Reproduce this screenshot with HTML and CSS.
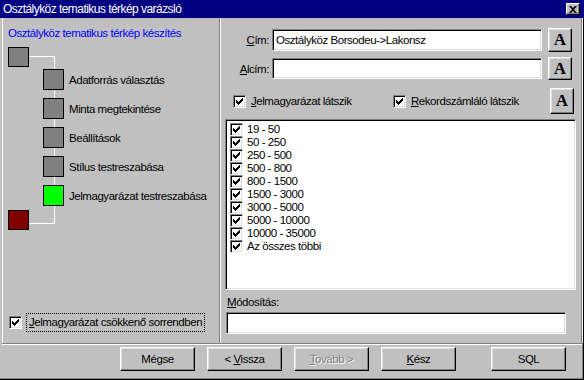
FILE: index.html
```html
<!DOCTYPE html>
<html lang="hu">
<head>
  <meta charset="UTF-8" />
  <title>Osztályköz tematikus térkép varázsló</title>
  <link rel="stylesheet" href="styles.css">
</head>
<body>
<div class="window">
  <div class="titlebar">
    <span class="title">Osztályköz tematikus térkép varázsló</span>
    <span class="close"><svg width="8" height="7" viewBox="0 0 8 7"><path d="M0 0h2l2 2 2-2h2l-3 3.5 3 3.5h-2l-2-2-2 2h-2l3-3.5z" fill="#000"/></svg></span>
  </div>

  <div class="main">
    <div class="left">
      <div class="heading">Osztályköz tematikus térkép készítés</div>
      <div class="tree">
        <div class="node root"><span class="box gray"></span></div>
        <div class="node child"><span class="box gray"></span><span>Adatforrás választás</span></div>
        <div class="node child"><span class="box gray"></span><span>Minta megtekintése</span></div>
        <div class="node child"><span class="box gray"></span><span>Beállítások</span></div>
        <div class="node child"><span class="box gray"></span><span>Stílus testreszabása</span></div>
        <div class="node child"><span class="box green"></span><span>Jelmagyarázat testreszabása</span></div>
        <div class="node last"><span class="box red"></span></div>
      </div>
      <div class="sort-row">
        <span class="cb"><svg viewBox="0 0 11 11"><path d="M2 4h1v1h1v1h1v-1h1v-1h1v-1h1v-1h1v3h-1v1h-1v1h-1v1h-1v1h-1v-1h-1v-1h-1v-3z"/></svg></span>
        <span class="focus"><u>J</u>elmagyarázat csökkenő sorrendben</span>
      </div>
    </div>

    <div class="right">
      <div class="field-row first">
        <span class="lbl"><u>C</u>ím:</span>
        <div class="input">Osztályköz Borsodeu-&gt;Lakonsz</div>
        <span class="font-btn">A</span>
      </div>
      <div class="field-row second">
        <span class="lbl"><u>A</u>lcím:</span>
        <div class="input"></div>
        <span class="font-btn">A</span>
      </div>
      <div class="check-line">
        <span class="opt opt-legend">
          <span class="cb"><svg viewBox="0 0 11 11"><path d="M2 4h1v1h1v1h1v-1h1v-1h1v-1h1v-1h1v3h-1v1h-1v1h-1v1h-1v1h-1v-1h-1v-1h-1v-3z"/></svg></span>
          <span><u>J</u>elmagyarázat látszik</span>
        </span>
        <span class="opt">
          <span class="cb"><svg viewBox="0 0 11 11"><path d="M2 4h1v1h1v1h1v-1h1v-1h1v-1h1v-1h1v3h-1v1h-1v1h-1v1h-1v1h-1v-1h-1v-1h-1v-3z"/></svg></span>
          <span><u>R</u>ekordszámláló látszik</span>
        </span>
        <span class="font-btn tall">A</span>
      </div>

      <div class="listbox" id="classList"></div>

      <div class="mod-label"><u>M</u>ódosítás:</div>
      <div class="input mod-input"></div>
    </div>
  </div>

  <div class="buttons">
    <span class="btn">Mégse</span>
    <span class="btn"><span>&lt;&nbsp;<u>V</u>issza</span></span>
    <span class="btn disabled"><span><u>T</u>ovább&nbsp;&gt;</span></span>
    <span class="btn"><span><u>K</u>ész</span></span>
    <span class="btn sql">SQL</span>
  </div>
</div>

<script>
  var ranges = ['19 - 50', '50 - 250', '250 - 500', '500 - 800', '800 - 1500',
    '1500 - 3000', '3000 - 5000', '5000 - 10000', '10000 - 35000', 'Az összes többi'];
  var list = document.getElementById('classList');
  var check = '<span class="cb"><svg viewBox="0 0 11 11"><path d="M2 4h1v1h1v1h1v-1h1v-1h1v-1h1v-1h1v3h-1v1h-1v1h-1v1h-1v1h-1v-1h-1v-1h-1v-3z"/></svg></span>';
  ranges.forEach(function (r) {
    var row = document.createElement('div');
    row.className = 'item';
    row.innerHTML = check + '<span>' + r + '</span>';
    list.appendChild(row);
  });
</script>
</body>
</html>
```

FILE: styles.css
```css
* { box-sizing: border-box; }
body { margin: 0; background: #c0c0c0; color: #000; font-family: "Liberation Sans", Arial, sans-serif; font-size: 11.5px; letter-spacing: -0.45px; }
u { text-decoration: underline; text-underline-offset: 1px; }

.window { width: 584px; height: 380px; background: #c0c0c0; display: flex; flex-direction: column; box-shadow: inset -1px -1px 0 #000, inset -2px -2px 0 #808080; }

.titlebar { height: 18px; flex: none; background: #000080; color: #fff; display: flex; align-items: center; justify-content: space-between; padding: 0 4px 0 3px; font-size: 12px; letter-spacing: -0.55px; }
.close { width: 14px; height: 12px; background: #c0c0c0; display: flex; align-items: center; justify-content: center; border: 1px solid; border-color: #fff #000 #000 #fff; box-shadow: inset -1px -1px 0 #808080; }
.close svg { display: block; }

.main { display: flex; height: 326px; flex: none; margin: 0 2px; border-bottom: 1px solid #808080; box-shadow: 0 1px 0 #fff; }

.left { width: 218px; border-left: 1px solid #fff; border-right: 1px solid #808080; display: flex; flex-direction: column; padding: 8px 0 12px 5px; }
.heading { color: #0000ff; line-height: 15px; }

.tree { position: relative; margin-top: 6px; }
.tree::before { content: ""; position: absolute; left: 20px; top: 9px; width: 26px; height: 166px; border: 1px solid #fff; border-left: none; }
.node { position: relative; display: flex; align-items: center; gap: 5px; }
.box { width: 21px; height: 20px; border: 1px solid #000; display: block; }
.gray { background: #808080; }
.green { background: #00ff00; }
.red { background: #800000; }
.child { margin-left: 35px; margin-bottom: 8px; }
.child .box { height: 21px; }
.root { margin-bottom: 2px; }
.child:nth-child(6) { margin-bottom: 4px; }

.sort-row { margin-top: auto; display: flex; align-items: center; gap: 5px; padding-left: 1px; }
.focus { outline: 1px dotted #000; padding: 1px 2px; line-height: 15px; }

.cb { width: 13px; height: 13px; flex: none; display: block; background: #fff; border: 1px solid; border-color: #808080 #fff #fff #808080; box-shadow: inset 1px 1px 0 #000, inset -1px -1px 0 #dfdfdf; }
.cb svg { display: block; width: 11px; height: 11px; fill: #000; }

.right { width: 362px; border-left: 1px solid #fff; border-right: 1px solid #808080; box-shadow: 1px 0 0 #fff; display: flex; flex-direction: column; padding: 10px 0 0 0; }

.field-row { display: flex; align-items: center; }
.field-row.first { height: 24px; }
.field-row.second { height: 23px; margin-top: 5px; }
.lbl { width: 51px; text-align: right; padding-right: 3px; }
.input { background: #fff; height: 22px; border: 1px solid; border-color: #808080 #fff #fff #808080; box-shadow: inset 1px 1px 0 #000, inset -1px -1px 0 #dfdfdf; padding: 3px 3px 0 3px; line-height: 15px; white-space: nowrap; }
.field-row .input { width: 270px; }
.second .input { height: 21px; }

.font-btn { width: 24px; height: 100%; margin-left: 6px; display: flex; align-items: center; justify-content: center; font-family: "Liberation Serif", "Times New Roman", serif; font-weight: bold; font-size: 17px; letter-spacing: 0; border: 1px solid; border-color: #fff #000 #000 #fff; box-shadow: inset -1px -1px 0 #808080, inset 1px 1px 0 #dfdfdf; }

.check-line { display: flex; align-items: center; height: 26px; margin-top: 8px; padding-left: 12px; }
.opt { display: flex; align-items: center; gap: 5px; }
.opt-legend { width: 160px; }
.font-btn.tall { margin-left: auto; margin-right: 7px; }

.listbox { margin: 5px 5px 0 4px; height: 171px; background: #fff; border: 1px solid; border-color: #808080 #fff #fff #808080; box-shadow: inset 1px 1px 0 #000, inset -1px -1px 0 #dfdfdf; padding: 3px 0 0 4px; }
.item { display: flex; align-items: center; gap: 4px; height: 13px; line-height: 13px; }

.mod-label { margin: 5px 0 0 6px; line-height: 15px; }
.mod-input { margin: 2px 0 0 5px; width: 340px; }

.buttons { display: flex; gap: 12px; padding: 3px 0 0 120px; }
.btn { width: 75px; height: 24px; display: flex; align-items: center; justify-content: center; border: 1px solid; border-color: #fff #000 #000 #fff; box-shadow: inset -1px -1px 0 #808080, inset 1px 1px 0 #dfdfdf; }
.btn.disabled { color: #808080; text-shadow: 1px 1px 0 #fff; }
.btn.sql { margin-left: 23px; }
```
